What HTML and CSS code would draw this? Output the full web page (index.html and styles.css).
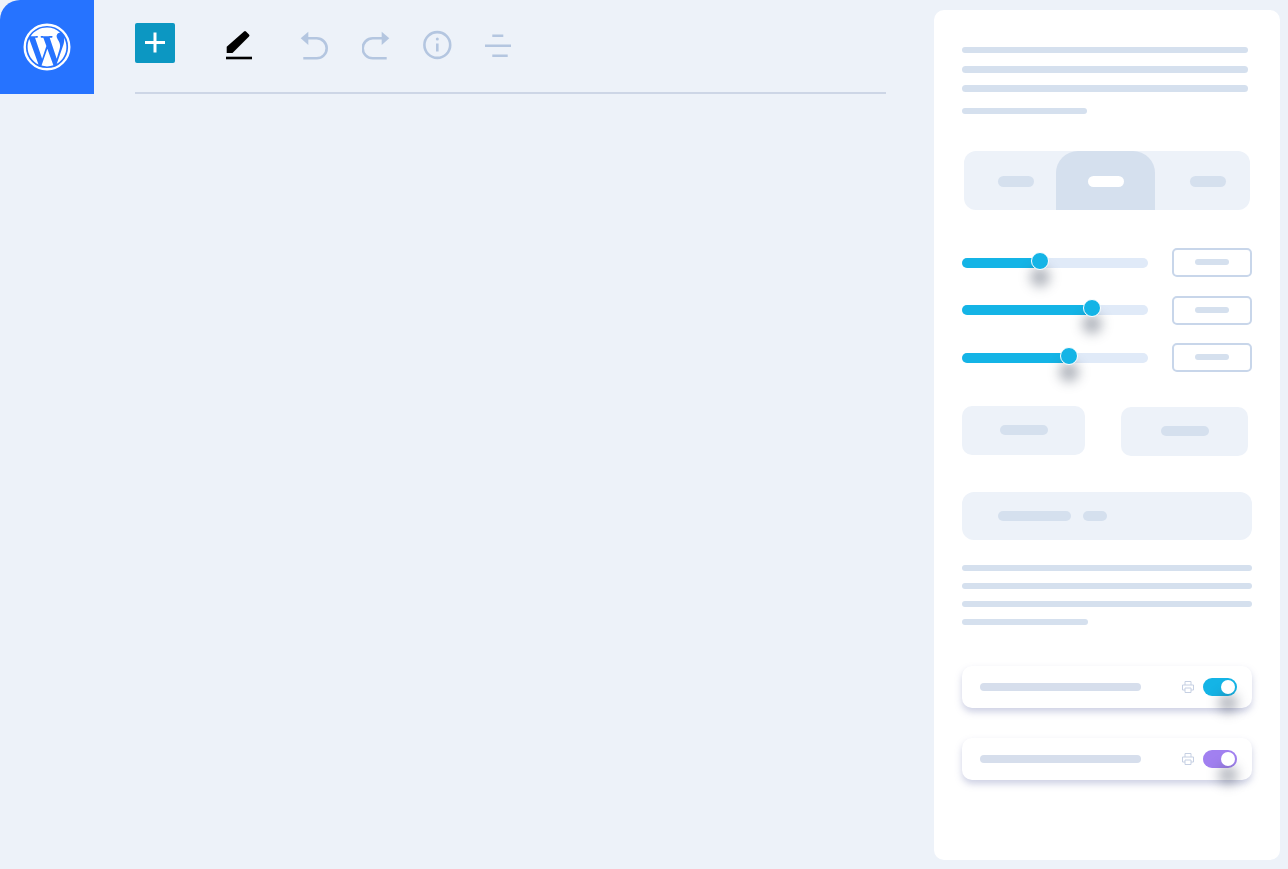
FILE: index.html
```html
<!DOCTYPE html>
<html lang="en">
<head>
    <meta charset="UTF-8">
    <title>Block editor</title>
    <link rel="stylesheet" href="styles.css">
</head>
<body>
    <div class="editor">
        <div class="main">
            <div class="logo">
                <svg width="48" height="48" viewBox="0 0 48 48" fill="#fff">
                    <circle cx="24" cy="24" r="22.300" fill="none" stroke="#fff" stroke-width="2.400"/>
                    <path transform="translate(24 24) scale(1.8) translate(-12 -12)" d="M21.469 6.825c.84 1.537 1.318 3.3 1.318 5.175 0 3.979-2.156 7.456-5.363 9.325l3.295-9.527c.615-1.54.82-2.771.82-3.864 0-.405-.026-.78-.07-1.11m-7.981.105c.647-.03 1.232-.105 1.232-.105.582-.075.514-.93-.067-.899 0 0-1.755.135-2.88.135-1.064 0-2.85-.15-2.85-.15-.585-.03-.661.855-.075.885 0 0 .54.061 1.125.09l1.68 4.605-2.37 7.08L5.354 6.9c.649-.03 1.234-.1 1.234-.1.585-.075.516-.93-.065-.896 0 0-1.746.138-2.874.138-.2 0-.438-.008-.69-.015C4.911 3.15 8.235 1.215 12 1.215c2.809 0 5.365 1.072 7.286 2.833-.046-.003-.091-.009-.141-.009-1.06 0-1.812.923-1.812 1.914 0 .89.513 1.643 1.06 2.531.411.72.89 1.643.89 2.977 0 .915-.354 1.994-.821 3.479l-1.075 3.585-3.9-11.61.001.014zM12 22.784c-1.059 0-2.081-.153-3.048-.437l3.237-9.406 3.315 9.087c.024.053.05.101.078.149-1.12.393-2.325.609-3.582.609M1.211 12c0-1.564.336-3.05.935-4.39L7.29 21.709C3.694 19.96 1.212 16.271 1.211 12"/>
                </svg>
            </div>
            <div class="toolbar">
                <svg class="tool-add" width="40" height="40" viewBox="0 0 40 40"><rect width="40" height="40" rx="2" fill="#0c97c2"/><path d="M20 9.5v20M10 19.5h20" stroke="#fff" stroke-width="3"/></svg>
                <svg class="tool-pen" width="26" height="40" viewBox="0 0 26 40"><path d="M.7 30v-6.3L18 8.5q1-1 2 0l3 3q1 1 0 2L6.5 30z" fill="#000"/><rect y="33.7" width="26" height="2.6"/></svg>
                <svg class="tool-undo" width="28" height="40" viewBox="0 0 28 40" fill="none" stroke="#b4c6e0" stroke-width="2.6"><path d="M8 15.3h8.7a10 10 0 0 1 0 20H3.3"/><path d="M.7 15.3l7.6-6.6V22z" fill="#b4c6e0" stroke="none"/></svg>
                <svg class="tool-redo" width="28" height="40" viewBox="0 0 28 40" fill="none" stroke="#b4c6e0" stroke-width="2.6"><path d="M20 15.3h-9.3a10 10 0 0 0 0 20h14"/><path d="M27.3 15.3l-7.6-6.6V22z" fill="#b4c6e0" stroke="none"/></svg>
                <svg class="tool-icon" width="29" height="40" viewBox="0 0 29 40" fill="none" stroke="#b4c6e0" stroke-width="2.6"><circle cx="14.3" cy="22" r="12.9"/><path d="M14.3 20.5v8"/><circle cx="14.3" cy="16" r="1.5" fill="#b4c6e0" stroke="none"/></svg>
                <svg class="tool-icon" width="26" height="40" viewBox="0 0 26 40" stroke="#b4c6e0" stroke-width="2.6"><path d="M7.3 12.7h11M0 22.7h26M7.3 32.7h15.4"/></svg>
            </div>
        </div>

        <div class="sidebar">
            <div class="lines lines-top">
                <div class="line"></div>
                <div class="line thick"></div>
                <div class="line thick"></div>
                <div class="line short"></div>
            </div>

            <div class="tabs">
                <div class="tab first"><span class="pill"></span></div>
                <div class="tab active"><span class="pill"></span></div>
                <div class="tab last"><span class="pill"></span></div>
            </div>

            <div class="sliders">
                <div class="slider-row">
                    <div class="track"><div class="fill" style="width: 78px"></div><div class="thumb" style="left: 78px"></div></div>
                    <div class="value"><span></span></div>
                </div>
                <div class="slider-row">
                    <div class="track"><div class="fill" style="width: 130px"></div><div class="thumb" style="left: 130px"></div></div>
                    <div class="value"><span></span></div>
                </div>
                <div class="slider-row">
                    <div class="track"><div class="fill" style="width: 107px"></div><div class="thumb" style="left: 107px"></div></div>
                    <div class="value"><span></span></div>
                </div>
            </div>

            <div class="buttons">
                <div class="btn"><span></span></div>
                <div class="btn btn-right"><span></span></div>
            </div>

            <div class="wide-btn">
                <span class="wide-a"></span>
                <span class="wide-b"></span>
            </div>

            <div class="lines lines-bottom">
                <div class="line"></div>
                <div class="line"></div>
                <div class="line"></div>
                <div class="line short"></div>
            </div>

            <div class="card">
                <div class="card-bar"></div>
                <svg class="printer" width="12" height="12" viewBox="0 0 12 12" fill="none" stroke="#c6d0e3"><path d="M3 4V.5h6V4M3 9H.5V4h11v5H9"/><path d="M3 7h6v4.500H3z"/></svg>
                <div class="toggle"></div>
            </div>
            <div class="card">
                <div class="card-bar"></div>
                <svg class="printer" width="12" height="12" viewBox="0 0 12 12" fill="none" stroke="#c6d0e3"><path d="M3 4V.5h6V4M3 9H.5V4h11v5H9"/><path d="M3 7h6v4.500H3z"/></svg>
                <div class="toggle purple"></div>
            </div>
        </div>
    </div>
</body>
</html>
```

FILE: styles.css
```css
body {
    margin: 0;
    background: #edf2f9;
    overflow: hidden;
}
.editor {
    display: flex;
    height: 869px;
}
.main {
    display: flex;
    align-items: flex-start;
    width: 934px;
}
.logo {
    display: flex;
    align-items: center;
    justify-content: center;
    width: 94px;
    height: 94px;
    background: #2673ff;
    border-top-left-radius: 20px;
}
.toolbar {
    display: flex;
    align-items: flex-start;
    box-sizing: border-box;
    width: 751px;
    height: 94px;
    margin-left: 41px;
    padding-top: 23px;
    border-bottom: 2px solid #cdd6e6;
}
.tool-pen { margin-left: 51px; }
.tool-undo { margin-left: 48px; }
.tool-redo { margin-left: 34px; }
.tool-icon { margin-left: 33px; }

/* right panel */
.sidebar {
    box-sizing: border-box;
    width: 346px;
    height: 850px;
    margin-top: 10px;
    padding: 37px 0 0 28px;
    background: white;
    border-radius: 10px;
}
.line {
    width: 286px;
    height: 6px;
    margin-bottom: 13px;
    background: #d5e0ee;
    border-radius: 3px;
}
.line.thick {
    height: 7px;
    border-radius: 4px;
    margin-bottom: 12px;
}
.line.short {
    width: 125px;
    margin-top: 16px;
    margin-bottom: 0;
}
.lines-bottom .line {
    width: 290px;
    margin-bottom: 12px;
}
.lines-bottom .line.short {
    width: 126px;
    margin-top: 0;
    margin-bottom: 0;
}

.tabs {
    display: flex;
    width: 286px;
    height: 59px;
    margin: 37px 0 0 2px;
    background: #edf2f9;
    border-radius: 12px;
}
.tab {
    display: flex;
    align-items: center;
    justify-content: center;
    width: 92px;
}
.tab.first .pill { margin-left: 12px; }
.tab.active {
    width: 99px;
    background: #d5e0ee;
    border-radius: 22px 22px 0 0;
}
.tab.last {
    width: 95px;
}
.tab.last .pill { margin-left: 10px; }
.pill {
    width: 36px;
    height: 11px;
    margin-top: 2px;
    background: #d5e0ee;
    border-radius: 6px;
}
.active .pill { background: white; }

.sliders { margin-top: 38px; }
.slider-row {
    display: flex;
    align-items: center;
    height: 29px;
    margin-bottom: 18.500px;
}
.track {
    position: relative;
    width: 185.500px;
    height: 10px;
    background: #e0eaf8;
    border-radius: 5px;
}
.fill {
    height: 10px;
    background: #14b4e6;
    border-radius: 5px;
}
.thumb {
    position: absolute;
    top: -6px;
    width: 16px;
    height: 16px;
    margin-left: -9px;
    background: #14b4e6;
    border: 1.500px solid white;
    border-radius: 50%;
    box-shadow: 0 16px 12px 1px rgba(60, 70, 90, 0.4);
}
.value {
    display: flex;
    align-items: center;
    justify-content: center;
    box-sizing: border-box;
    width: 80px;
    height: 29px;
    margin-left: 24px;
    background: white;
    border: 2px solid #c8d6ea;
    border-radius: 5px;
}
.value span {
    width: 34px;
    height: 6px;
    margin-bottom: 1px;
    background: #d5e0ee;
    border-radius: 3px;
}

.buttons {
    display: flex;
    margin-top: 34px;
}
.btn {
    display: flex;
    align-items: center;
    justify-content: center;
    width: 123px;
    height: 49px;
    background: #edf2f9;
    border-radius: 10px;
}
.btn-right {
    width: 127px;
    margin: 1px 0 0 36px;
}
.btn span {
    width: 48px;
    height: 10px;
    margin-top: -1px;
    background: #d5e0ee;
    border-radius: 5px;
}

.wide-btn {
    display: flex;
    align-items: center;
    width: 290px;
    height: 48px;
    margin-top: 36px;
    background: #edf2f9;
    border-radius: 12px;
}
.wide-a, .wide-b {
    height: 10px;
    background: #d5e0ee;
    border-radius: 5px;
}
.wide-a {
    width: 73px;
    margin: 0 0 0 36px;
}
.wide-b {
    width: 24px;
    margin: 0 0 0 12px;
}

.lines-bottom { margin-top: 24.500px; }

.card {
    display: flex;
    align-items: center;
    width: 290px;
    height: 42px;
    margin-bottom: 29.500px;
    background: white;
    border-radius: 10px;
    box-shadow: 0 4px 7px rgba(125, 135, 185, 0.38);
}
.lines-bottom + .card { margin-top: 41.500px; }
.card-bar {
    width: 161px;
    height: 8px;
    margin-left: 18px;
    background: #d6deec;
    border-radius: 4px;
}
.printer { margin-left: 41px; }
.toggle {
    position: relative;
    width: 34px;
    height: 18px;
    margin-left: 9px;
    background: #14b4e6;
    border-radius: 9px;
}
.toggle.purple { background: #a180f0; }
.toggle::before {
    content: "";
    position: absolute;
    top: 2px;
    right: 2px;
    width: 14px;
    height: 14px;
    background: white;
    border-radius: 50%;
    box-shadow: 0 16px 12px 3px rgba(60, 70, 90, 0.36);
}
```
